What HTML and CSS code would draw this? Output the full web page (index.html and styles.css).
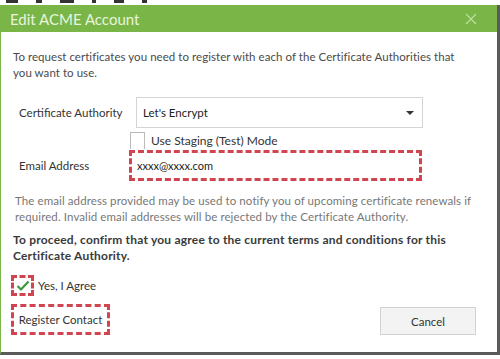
FILE: index.html
```html
<!DOCTYPE html>
<html>
<head>
<meta charset="utf-8">
<link rel="stylesheet" href="styles.css">
</head>
<body>
<div class="topstrip">
  <span class="mark m1"></span><span class="mark m2"></span><span class="mark m3"></span><span class="mark m4"></span><span class="mark m5"></span><span class="mark m6"></span>
</div>
<div class="dialog">
  <div class="titlebar">
    <span class="title">Edit ACME Account</span>
    <svg class="close" width="12" height="12" viewBox="0 0 12 12"><path d="M1 1 L11 11 M11 1 L1 11" stroke="#b9e09a" stroke-width="1.3" fill="none"/></svg>
  </div>
  <div class="content">
    <p class="intro">To request certificates you need to register with each of the Certificate Authorities that you want to use.</p>
    <div class="form">
      <div class="label">Certificate Authority</div>
      <div class="select"><span>Let's Encrypt</span><span class="arrow"></span></div>
      <div></div>
      <div class="staging"><span class="box"></span><span>Use Staging (Test) Mode</span></div>
      <div class="label">Email Address</div>
      <div class="email dashed">xxxx@xxxx.com</div>
    </div>
    <p class="note">The email address provided may be used to notify you of upcoming certificate renewals if required. Invalid email addresses will be rejected by the Certificate Authority.</p>
    <p class="terms">To proceed, confirm that you agree to the current terms and conditions for this Certificate Authority.</p>
    <div class="agree">
      <span class="checkwrap dashed"><svg width="14" height="12" viewBox="0 0 14 12"><path d="M1.5 6 L5 9.5 L12.5 1.5" stroke="#3b9a3b" stroke-width="2.2" fill="none"/></svg></span>
      <span>Yes, I Agree</span>
    </div>
    <div class="buttons">
      <div class="register dashed">Register Contact</div>
      <div class="cancel">Cancel</div>
    </div>
  </div>
</div>
</body>
</html>
```
FILE: styles.css
```css
html, body {
  margin: 0;
  padding: 0;
  background: #fff;
}
body {
  font-family: Lato, "Noto Sans", sans-serif;
  font-size: 11.5px;
  color: #444;
  width: 500px;
  height: 359px;
  overflow: hidden;
}
.topstrip {
  height: 5px;
  display: flex;
  align-items: flex-start;
  gap: 18px;
  padding-left: 6px;
}
.mark {
  display: block;
  height: 3px;
  background: #333;
}
.m1 { width: 12px; }
.m2 { width: 6px; }
.m3 { width: 14px; }
.m4 { width: 4px; }
.m5 { width: 10px; }
.m6 { width: 5px; }
.dialog {
  width: 496px;
  height: 347px;
  border-left: 1px solid #7ab547;
  border-right: 3px solid #5a5a5a;
  border-bottom: 3px solid #5a5a5a;
  background: #fff;
  display: flex;
  flex-direction: column;
}
.titlebar {
  height: 27px;
  background: #7ab547;
  display: flex;
  align-items: center;
  justify-content: space-between;
  padding: 0 20px 0 9px;
}
.title {
  color: #e8f4de;
  font-size: 15px;
}
.close {
  display: block;
}
.content {
  padding: 17px 12px 0 12px;
}
p {
  margin: 0;
}
.intro {
  line-height: 16px;
  color: #4a4a4a;
  padding-right: 20px;
  letter-spacing: 0.05px;
}
.form {
  display: grid;
  grid-template-columns: 110px 294px;
  margin-top: 16px;
  margin-left: 6px;
  align-items: center;
}
.label {
  color: #333;
}
.select {
  margin-left: 7px;
  height: 29px;
  border: 1px solid #d4d4d4;
  display: flex;
  align-items: center;
  justify-content: space-between;
  padding: 0 8px 0 6px;
  color: #222;
}
.arrow {
  width: 0;
  height: 0;
  border-left: 4px solid transparent;
  border-right: 4px solid transparent;
  border-top: 4px solid #333;
}
.staging {
  display: flex;
  align-items: center;
  gap: 6px;
  height: 20px;
  margin-top: 2px;
  color: #333;
  font-size: 12px;
}
.staging .box {
  width: 15px;
  height: 17px;
  border: 1px solid #bbb;
  border-bottom: none;
  box-sizing: border-box;
  margin-left: 1px;
}
.dashed {
  border: 3px dashed #d0454f;
  box-sizing: border-box;
}
.email {
  height: 31px;
  width: 293px;
  display: flex;
  align-items: center;
  padding-left: 5px;
  color: #222;
  font-size: 11px;
}
.note {
  margin-top: 12px;
  margin-left: 2px;
  line-height: 15.5px;
  color: #777;
  padding-right: 10px;
  letter-spacing: 0.1px;
}
.terms {
  margin-top: 8px;
  line-height: 16px;
  font-size: 12px;
  font-weight: bold;
  color: #3a3a3a;
  padding-right: 20px;
  letter-spacing: 0.2px;
}
.agree {
  display: flex;
  align-items: center;
  gap: 4px;
  margin-top: 11px;
  margin-left: -2px;
  color: #333;
}
.checkwrap {
  width: 23px;
  height: 21px;
  display: flex;
  align-items: center;
  justify-content: center;
}
.buttons {
  display: flex;
  justify-content: space-between;
  align-items: center;
  margin-top: 8px;
  margin-left: -2px;
  padding-right: 9px;
}
.register {
  width: 99px;
  height: 31px;
  display: flex;
  align-items: center;
  justify-content: center;
  color: #333;
}
.cancel {
  width: 96px;
  height: 28px;
  margin-top: 3px;
  background: #f3f3f3;
  border: 1px solid #d2d2d2;
  box-sizing: border-box;
  display: flex;
  align-items: center;
  justify-content: center;
  color: #333;
}
```
